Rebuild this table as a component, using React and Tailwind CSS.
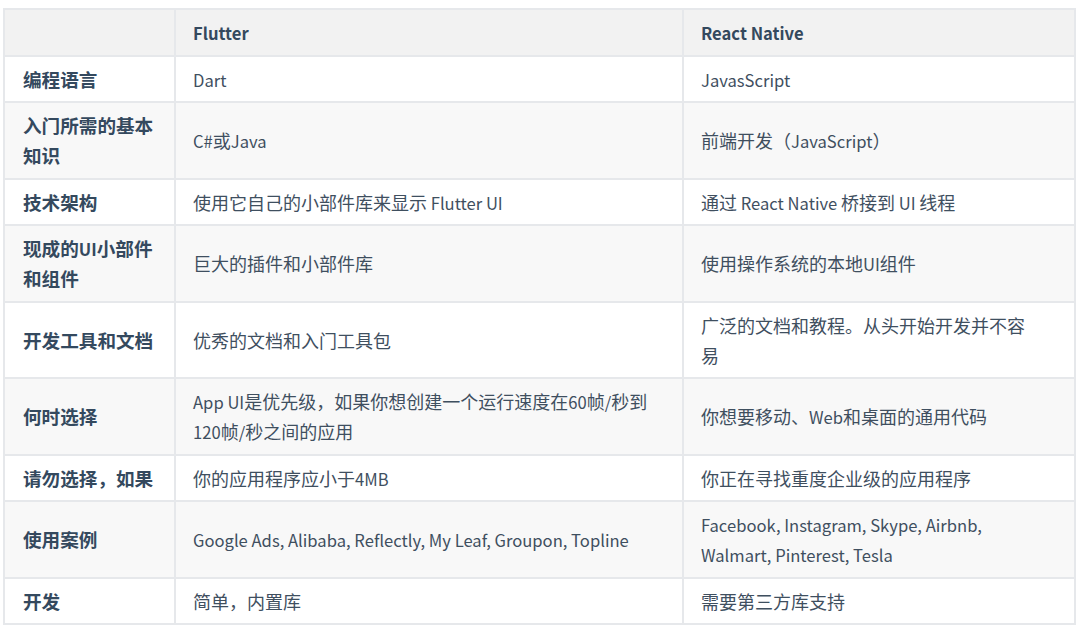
const rows = [
  { k: '编程语言', a: 'Dart', b: 'JavasScript' },
  { k: '入门所需的基本\n知识', a: 'C#或Java', b: '前端开发（JavaScript）' },
  { k: '技术架构', a: '使用它自己的小部件库来显示 Flutter UI', b: '通过 React Native 桥接到 UI 线程' },
  { k: '现成的UI小部件\n和组件', a: '巨大的插件和小部件库', b: '使用操作系统的本地UI组件' },
  { k: '开发工具和文档', a: '优秀的文档和入门工具包', b: '广泛的文档和教程。从头开始开发并不容\n易' },
  { k: '何时选择', a: 'App UI是优先级，如果你想创建一个运行速度在60帧/秒到\n120帧/秒之间的应用', b: '你想要移动、Web和桌面的通用代码' },
  { k: '请勿选择，如果', a: '你的应用程序应小于4MB', b: '你正在寻找重度企业级的应用程序' },
  { k: '使用案例', a: 'Google Ads, Alibaba, Reflectly, My Leaf, Groupon, Topline', b: 'Facebook, Instagram, Skype, Airbnb,\nWalmart, Pinterest, Tesla' },
  { k: '开发', a: '简单，内置库', b: '需要第三方库支持' },
]

// latin runs are set a bit smaller than the CJK glyphs, like the source font does
function Mixed({ text }) {
  return text.split(/([\u0020-\u007E]+)/).map((part, i) =>
    /^[\u0020-\u007E]+$/.test(part) ? (
      <span key={i} className="text-[16.6px] leading-none">{part}</span>
    ) : (
      <span key={i}>{part}</span>
    ),
  )
}

const cell = 'border-2 border-[#e6e8eb] py-[7.25px] text-left align-middle whitespace-pre-line leading-[30px]'

export default function App() {
  return (
    <div className="min-h-[634px] w-[1080px] bg-white pl-[3px] pt-[8px] font-['Noto_Sans_CJK_SC','Noto_Sans',sans-serif] text-[18px] leading-[30px] text-[#3f4f5f]">
      <table className="w-[1071px] table-fixed border-collapse border-2 border-[#e6e8eb]">
        <colgroup>
          <col className="w-[171px]" />
          <col className="w-[508px]" />
          <col className="w-[392px]" />
        </colgroup>
        <thead>
          <tr className="bg-[#f2f2f2]">
            <th className={`${cell} px-[18px]`}></th>
            <th className={`${cell} px-[17px] font-semibold text-[#34495e]`}><Mixed text="Flutter" /></th>
            <th className={`${cell} px-[17px] font-semibold text-[#34495e]`}><Mixed text="React Native" /></th>
          </tr>
        </thead>
        <tbody>
          {rows.map((r, i) => (
            <tr key={r.k} className={i % 2 === 1 ? 'bg-[#f8f8f8]' : 'bg-white'}>
              <td className={`${cell} px-[18px] text-[18.6px] font-bold text-[#34495e]`}><Mixed text={r.k} /></td>
              <td className={`${cell} px-[17px]`}><Mixed text={r.a} /></td>
              <td className={`${cell} px-[17px]`}><Mixed text={r.b} /></td>
            </tr>
          ))}
        </tbody>
      </table>
    </div>
  )
}
